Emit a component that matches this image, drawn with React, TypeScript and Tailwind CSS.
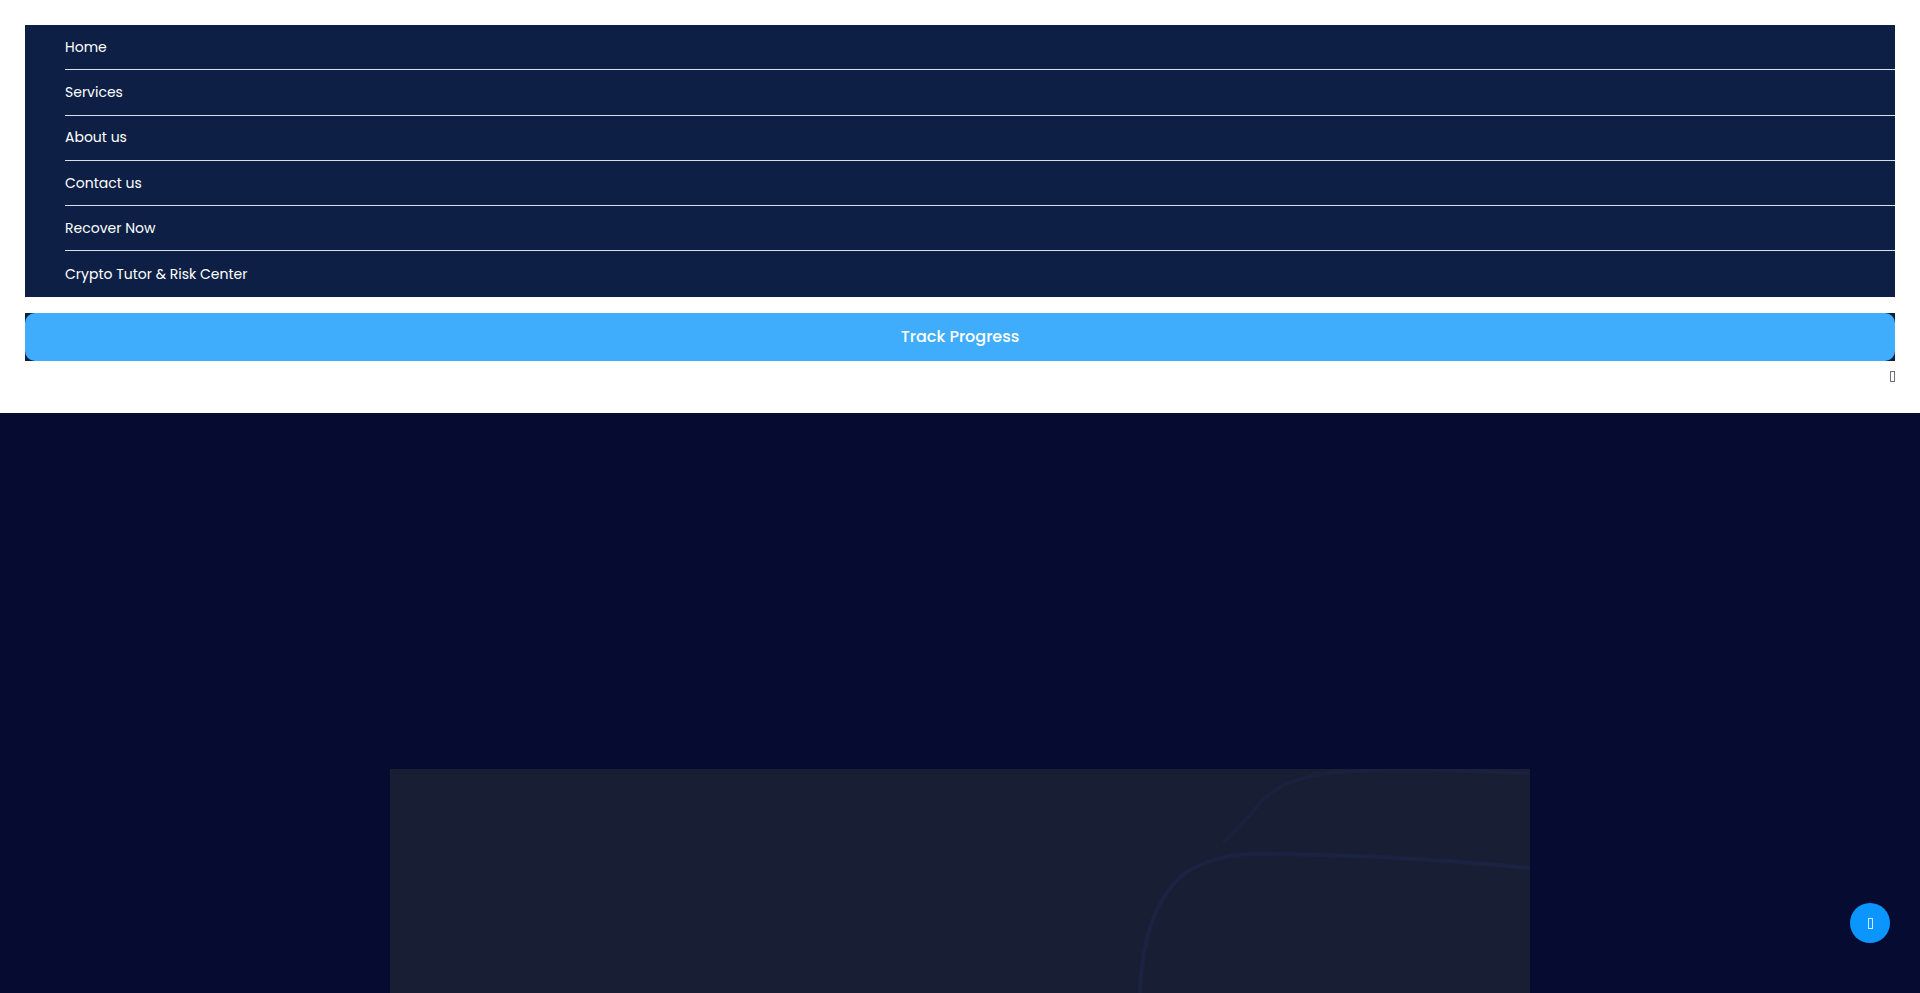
const menu = ["Home", "Services", "About us", "Contact us", "Recover Now", "Crypto Tutor & Risk Center"];

function Tofu({ className }: { className: string }) {
  return <span className={`inline-block w-[5px] h-[11px] border ${className}`} />;
}

export default function App() {
  return (
    <div className="min-h-screen bg-[#050b31] font-['Poppins','Inter','Noto_Sans',sans-serif]">
      <header className="bg-white h-[413px] px-[25px] pt-[25px]">
        <nav className="bg-[#0d1f45]">
          <ul className="pl-[40px]">
            {menu.map((item, i) => (
              <li
                key={item}
                className={`flex items-center h-[45.3px] text-[14px] text-white ${
                  i < menu.length - 1 ? "border-b border-[#d8dde8]" : ""
                }`}
              >
                {item}
              </li>
            ))}
          </ul>
        </nav>

        <div className="mt-[16px] bg-[#0d1f45]">
          <button className="w-full h-[48px] rounded-[10px] bg-[#3fadfc] text-white text-[16px] font-medium">
            Track Progress
          </button>
        </div>

        <div className="flex justify-end mt-[10px]">
          <Tofu className="border-gray-500" />
        </div>
      </header>

      <section className="h-[700px] pt-[356px]">
        <div className="relative mx-auto w-[1140px] h-[400px] bg-[#181e33] overflow-hidden">
          <svg className="absolute inset-0 blur-[1px]" width="1140" height="400" viewBox="0 0 1140 400" fill="none">
            <path
              d="M750 224 C752 170 765 128 795 104 C818 90 838 86 860 85 C930 84 1050 90 1140 99"
              stroke="#22326a"
              strokeOpacity="0.4"
              strokeWidth="3"
            />
            <path
              d="M833 74 C845 62 858 50 870 34 C885 18 905 8 945 3 C990 -1 1060 0 1140 4"
              stroke="#22326a"
              strokeOpacity="0.25"
              strokeWidth="3"
            />
          </svg>
        </div>
      </section>

      <button className="fixed right-[30px] bottom-[50px] w-[40px] h-[40px] rounded-full bg-[#0a95ff] flex items-center justify-center">
        <Tofu className="border-[#cfe8ff]" />
      </button>
    </div>
  );
}
